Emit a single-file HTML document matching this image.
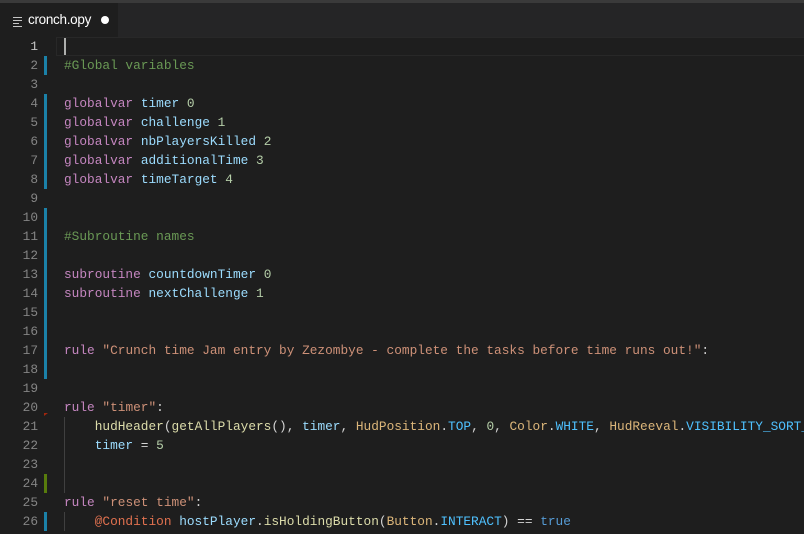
<!DOCTYPE html>
<html><head><style>
body{margin:0;width:804px;height:534px;overflow:hidden;background:#1e1e1e;font-family:"Liberation Mono",monospace;}
.tabs{position:absolute;left:0;top:0;width:804px;height:37px;background:#252526;border-top:3px solid #3a3a3a;box-sizing:border-box}
.tab{position:absolute;left:0;top:0;width:118px;height:34px;background:#1e1e1e;color:#fff;font-family:"Liberation Sans",sans-serif;font-size:13.5px;line-height:34px}
.tab .ic{position:absolute;left:13px;top:14px;width:9px;}
.tab .ic i{display:block;height:1px;background:#c5c5c5;margin-bottom:2px}
.tab .t{position:absolute;left:28px;top:0;letter-spacing:-0.3px}
.tab .dot{position:absolute;left:101px;top:13px;width:8px;height:8px;border-radius:50%;background:#fff}
.ed{position:absolute;left:0;top:37px;width:804px;height:497px;overflow:hidden}
.l{position:relative;height:19px;line-height:19px;font-size:12.8px;white-space:pre;color:#d4d4d4;overflow:hidden;width:804px}
.n{position:absolute;right:766px;color:#858585;text-align:right}
.c{position:absolute;left:64px}
.bar{position:absolute;left:44px;top:0;width:3px;height:19px;background:#1b81a8}
.g{background:#587c0c}
.cur{position:absolute;left:56px;top:0;width:748px;height:17px;border:1px solid #282828}
.caret{position:absolute;left:64px;top:1px;width:2px;height:17px;background:#aeafad}
.ig{position:absolute;left:64px;top:0;width:1px;height:19px;background:#404040}
.k{color:#c586c0}.cm{color:#6a9955}.nu{color:#b5cea8}.s{color:#ce9178}.v{color:#9cdcfe}.f{color:#dcdcaa}.cl{color:#dcb67a}.co{color:#4fc1ff}.at{color:#e0714f}.b{color:#569cd6}
</style></head><body>
<div class="tabs"><div class="tab"><div class="ic"><i></i><i></i><i style="width:6px"></i><i></i></div><span class="t">cronch.opy</span><div class="dot"></div></div></div>
<div class="ed">
<div class="l"><div class="cur"></div><div class="caret"></div><span class="n" style="color:#c6c6c6">1</span></div>
<div class="l"><div class="bar"></div><span class="n">2</span><span class="c cm">#Global variables</span></div>
<div class="l"><span class="n">3</span></div>
<div class="l"><div class="bar"></div><span class="n">4</span><span class="c"><span class="k">globalvar</span> <span class="v">timer</span> <span class="nu">0</span></span></div>
<div class="l"><div class="bar"></div><span class="n">5</span><span class="c"><span class="k">globalvar</span> <span class="v">challenge</span> <span class="nu">1</span></span></div>
<div class="l"><div class="bar"></div><span class="n">6</span><span class="c"><span class="k">globalvar</span> <span class="v">nbPlayersKilled</span> <span class="nu">2</span></span></div>
<div class="l"><div class="bar"></div><span class="n">7</span><span class="c"><span class="k">globalvar</span> <span class="v">additionalTime</span> <span class="nu">3</span></span></div>
<div class="l"><div class="bar"></div><span class="n">8</span><span class="c"><span class="k">globalvar</span> <span class="v">timeTarget</span> <span class="nu">4</span></span></div>
<div class="l"><span class="n">9</span></div>
<div class="l"><div class="bar"></div><span class="n">10</span></div>
<div class="l"><div class="bar"></div><span class="n">11</span><span class="c cm">#Subroutine names</span></div>
<div class="l"><div class="bar"></div><span class="n">12</span></div>
<div class="l"><div class="bar"></div><span class="n">13</span><span class="c"><span class="k">subroutine</span> <span class="v">countdownTimer</span> <span class="nu">0</span></span></div>
<div class="l"><div class="bar"></div><span class="n">14</span><span class="c"><span class="k">subroutine</span> <span class="v">nextChallenge</span> <span class="nu">1</span></span></div>
<div class="l"><div class="bar"></div><span class="n">15</span></div>
<div class="l"><div class="bar"></div><span class="n">16</span></div>
<div class="l"><div class="bar"></div><span class="n">17</span><span class="c"><span class="k">rule</span> <span class="s">"Crunch time Jam entry by Zezombye - complete the tasks before time runs out!"</span>:</span></div>
<div class="l"><div class="bar"></div><span class="n">18</span></div>
<div class="l"><span class="n">19</span></div>
<div class="l"><span class="n">20</span><span class="c"><span class="k">rule</span> <span class="s">"timer"</span>:</span><div style="position:absolute;left:44px;top:15px;width:0;height:0;border-top:3px solid #a1260d;border-right:4px solid transparent;border-bottom:3px solid transparent"></div></div>
<div class="l"><div class="ig"></div><span class="n">21</span><span class="c">    <span class="f">hudHeader</span>(<span class="f">getAllPlayers</span>(), <span class="v">timer</span>, <span class="cl">HudPosition</span>.<span class="co">TOP</span>, <span class="nu">0</span>, <span class="cl">Color</span>.<span class="co">WHITE</span>, <span class="cl">HudReeval</span>.<span class="co">VISIBILITY_SORT_ORDER</span></span></div>
<div class="l"><div class="ig"></div><span class="n">22</span><span class="c">    <span class="v">timer</span> = <span class="nu">5</span></span></div>
<div class="l"><div class="ig"></div><span class="n">23</span></div>
<div class="l"><div class="ig"></div><div class="bar g"></div><span class="n">24</span></div>
<div class="l"><span class="n">25</span><span class="c"><span class="k">rule</span> <span class="s">"reset time"</span>:</span></div>
<div class="l"><div class="ig"></div><div class="bar"></div><span class="n">26</span><span class="c">    <span class="at">@Condition</span> <span class="v">hostPlayer</span>.<span class="f">isHoldingButton</span>(<span class="cl">Button</span>.<span class="co">INTERACT</span>) == <span class="b">true</span></span></div>
</div>
</body></html>
